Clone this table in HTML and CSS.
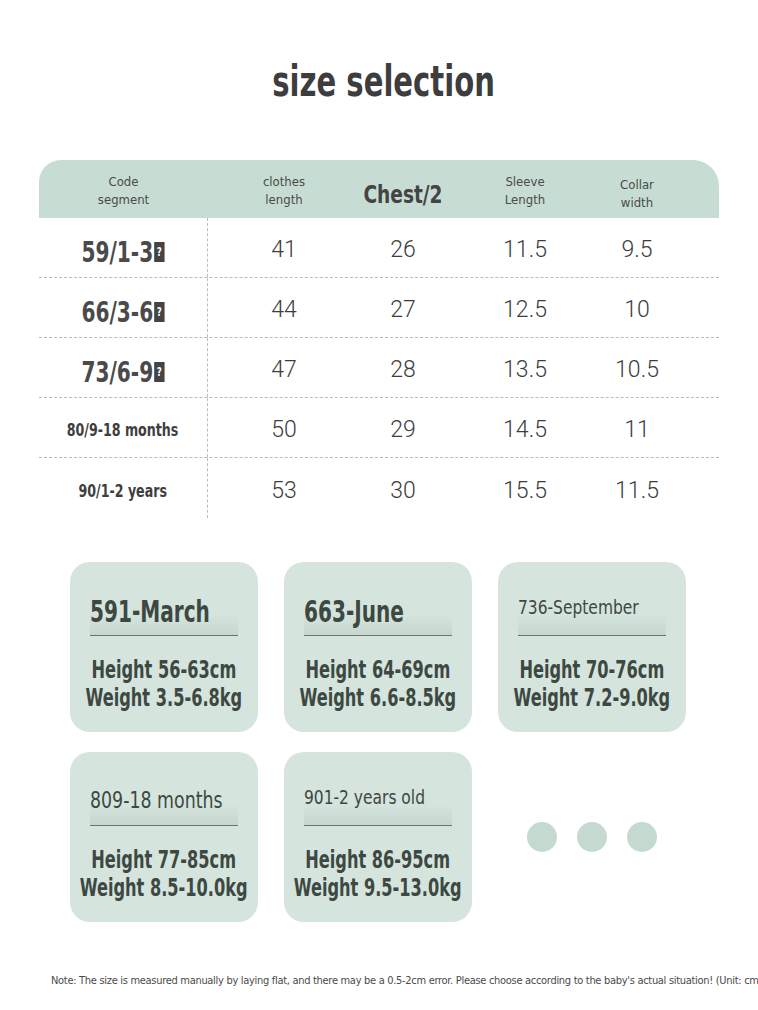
FILE: index.html
```html
<!DOCTYPE html>
<html lang="en">
<head>
  <meta charset="UTF-8" />
  <meta name="viewport" content="width=device-width, initial-scale=1.0"/>
  <title>size selection</title>
  <link rel="stylesheet" href="styles.css">
</head>
<body>

<div class="page">
  <h1 class="title"><span>size selection</span></h1>

  <div class="table">
    <div class="row head">
      <div class="cell small">Code<br>segment</div>
      <div class="cell small">clothes<br>length</div>
      <div class="cell big"><span>Chest/2</span></div>
      <div class="cell small">Sleeve<br>Length</div>
      <div class="cell small low">Collar<br>width</div>
    </div>
    <div class="row">
      <div class="cell code"><span>59/1-3<i class="tofu">?</i></span></div>
      <div class="cell num">41</div>
      <div class="cell num">26</div>
      <div class="cell num">11.5</div>
      <div class="cell num">9.5</div>
    </div>
    <div class="row">
      <div class="cell code"><span>66/3-6<i class="tofu">?</i></span></div>
      <div class="cell num">44</div>
      <div class="cell num">27</div>
      <div class="cell num">12.5</div>
      <div class="cell num">10</div>
    </div>
    <div class="row">
      <div class="cell code"><span>73/6-9<i class="tofu">?</i></span></div>
      <div class="cell num">47</div>
      <div class="cell num">28</div>
      <div class="cell num">13.5</div>
      <div class="cell num">10.5</div>
    </div>
    <div class="row">
      <div class="cell code-sm"><span>80/9-18 months</span></div>
      <div class="cell num">50</div>
      <div class="cell num">29</div>
      <div class="cell num">14.5</div>
      <div class="cell num">11</div>
    </div>
    <div class="row last">
      <div class="cell code-sm"><span>90/1-2 years</span></div>
      <div class="cell num">53</div>
      <div class="cell num">30</div>
      <div class="cell num">15.5</div>
      <div class="cell num">11.5</div>
    </div>
  </div>

  <div class="cards">
    <div class="card">
      <div class="card-title large"><span>591-March</span></div>
      <div class="card-body"><span>Height 56-63cm<br>Weight 3.5-6.8kg</span></div>
    </div>
    <div class="card">
      <div class="card-title large"><span>663-June</span></div>
      <div class="card-body"><span>Height 64-69cm<br>Weight 6.6-8.5kg</span></div>
    </div>
    <div class="card">
      <div class="card-title"><span>736-September</span></div>
      <div class="card-body"><span>Height 70-76cm<br>Weight 7.2-9.0kg</span></div>
    </div>
    <div class="card">
      <div class="card-title mid"><span>809-18 months</span></div>
      <div class="card-body"><span>Height 77-85cm<br>Weight 8.5-10.0kg</span></div>
    </div>
    <div class="card">
      <div class="card-title"><span>901-2 years old</span></div>
      <div class="card-body"><span>Height 86-95cm<br>Weight 9.5-13.0kg</span></div>
    </div>
    <div class="dots">
      <span class="dot"></span>
      <span class="dot"></span>
      <span class="dot"></span>
    </div>
  </div>

  <p class="note">Note: The size is measured manually by laying flat, and there may be a 0.5-2cm error. Please choose according to the baby's actual situation! (Unit: cm</p>
</div>

</body>
</html>
```

FILE: styles.css
```css
* { box-sizing: border-box; }

body {
  margin: 0; background: #fff; color: #444;
  font-family: 'DejaVu Sans', sans-serif;
  font-stretch: condensed;
  overflow: hidden;
}

.page {
  width: 758px; height: 1010px;
  padding-top: 56px;
  overflow: hidden;
}

/* condensed look: text squeezed sideways */
.title span, .big span, .code span, .code-sm span,
.card-title span, .card-body span {
  display: inline-block;
  transform-origin: center;
}

.title {
  margin: 0; text-align: center;
  padding-left: 10px;
  font-size: 42px; font-weight: bold; color: #3d3d3d;
  line-height: 52px;
}
.title span { transform: scaleX(0.77); }

.table {
  margin: 52px 39px 0 39px;
  width: 680px;
}

.row {
  display: grid;
  grid-template-columns: 169px 152px 86px 158px 66px;
  padding-right: 49px;
  height: 60px;
  border-bottom: 1px dashed #bcbcbc;
}

.row.last { border-bottom: none; }

.row.head {
  height: 58px;
  background: #c7ddd3;
  border-radius: 22px 26px 0 0;
  border-bottom: none;
}

.cell {
  display: flex; align-items: center; justify-content: center;
  text-align: center; white-space: nowrap;
}

.row:not(.head) .cell:first-child { border-right: 1px dashed #bcbcbc; }

.small { font-size: 13px; line-height: 18px; color: #4a4a4a; padding-top: 4px; }
.small.low { padding-top: 9px; }
.big { font-size: 24px; font-weight: bold; color: #444; padding-top: 12px; }
.big span { transform: scaleX(0.86); }

.code { font-size: 28px; font-weight: bold; color: #4a4a4a; padding-top: 10px; }
.code span { transform: scaleX(0.8); }
.code-sm { font-size: 18px; font-weight: bold; color: #3e3e3e; padding-top: 4px; }
.code-sm span { transform: scaleX(0.78); }

.tofu {
  display: inline-block;
  width: 13px; height: 20px;
  background: #444; color: #fff;
  font-size: 12px; font-style: normal; line-height: 20px;
  vertical-align: 6px;
  margin-left: 1px;
}

.num {
  font-family: Roboto, 'Open Sans', sans-serif;
  font-stretch: normal;
  font-size: 23px; font-weight: 300; color: #3c3c3c;
  padding-top: 4px;
}

.cards {
  margin: 44px 71px 0 70px;
  display: grid;
  grid-template-columns: repeat(3, 188px);
  column-gap: 26px; row-gap: 20px;
}

.card {
  height: 170px;
  background: #d5e4dd;
  border-radius: 20px;
  padding: 26px 20px 0 20px;
  color: #3e4843;
  white-space: nowrap;
}

.card-title {
  font-size: 20px; height: 48px;
  display: flex; align-items: center;
  border-bottom: 1px solid #6b7670;
  background: linear-gradient(to bottom, rgba(0,0,0,0) 55%, rgba(150,170,160,0.22));
  padding-bottom: 10px;
}
.card-title span { transform-origin: left center; transform: scaleX(0.86); }

.card-title.large { font-size: 31px; font-weight: bold; padding: 2px 0 4px 0; }
.card-title.large span { transform: scaleX(0.72); }
.card-title.mid { font-size: 23px; padding-bottom: 4px; }
.card-title.mid span { transform: scaleX(0.84); }

.card-body {
  margin-top: 20px;
  font-size: 25px; line-height: 28px;
  font-weight: bold;
  display: flex; justify-content: center;
  text-align: center;
}
.card-body span { transform: scaleX(0.72); }

.dots {
  display: flex; align-items: center; justify-content: center;
  gap: 20px;
}

.dot {
  width: 30px; height: 30px; border-radius: 50%;
  background: #c4dad1;
}

.note {
  margin: 52px 0 0 51px;
  white-space: nowrap;
  font-size: 11px; color: #4a4a4a;
  letter-spacing: -0.3px;
}
```
